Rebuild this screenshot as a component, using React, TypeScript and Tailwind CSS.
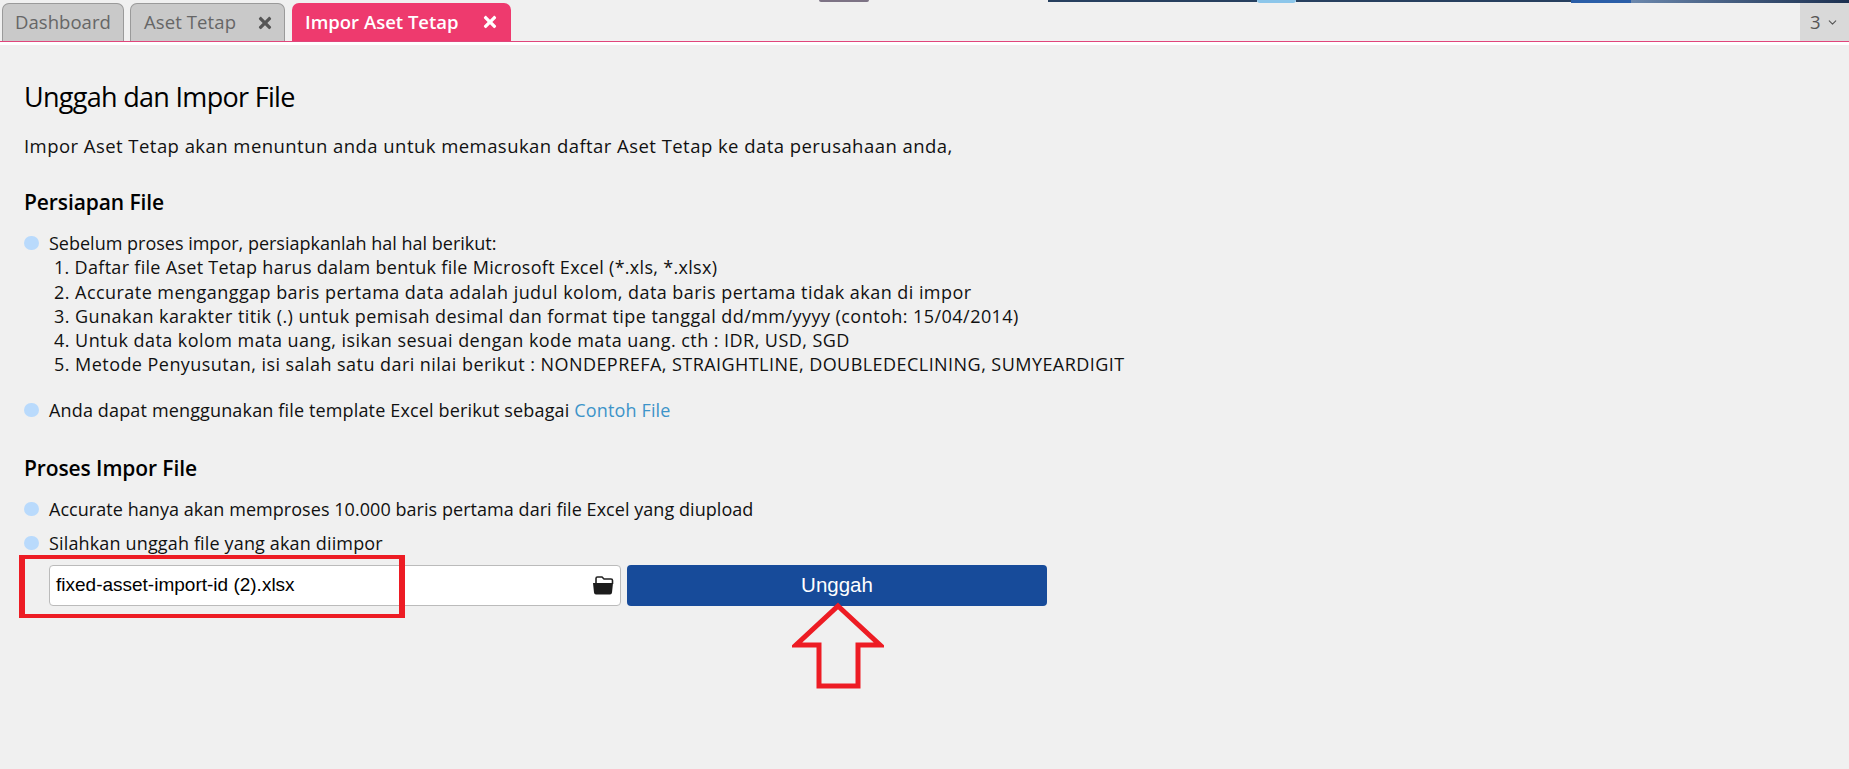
import React from 'react'
import { ChevronDown } from 'lucide-react'
import { FaTimes } from 'react-icons/fa'

const steps = [
  'Daftar file Aset Tetap harus dalam bentuk file Microsoft Excel (*.xls, *.xlsx)',
  'Accurate menganggap baris pertama data adalah judul kolom, data baris pertama tidak akan di impor',
  'Gunakan karakter titik (.) untuk pemisah desimal dan format tipe tanggal dd/mm/yyyy (contoh: 15/04/2014)',
  'Untuk data kolom mata uang, isikan sesuai dengan kode mata uang. cth : IDR, USD, SGD',
  'Metode Penyusutan, isi salah satu dari nilai berikut : NONDEPREFA, STRAIGHTLINE, DOUBLEDECLINING, SUMYEARDIGIT',
]

const Bullet: React.FC<{ children: React.ReactNode; className?: string }> = ({ children, className = '' }) => (
  <div className={`flex text-[18px] ${className}`}>
    <span className="mt-[5px] h-[14px] w-[15px] shrink-0 rounded-full bg-[#b9dafc]" />
    <div className="ml-[10px]">{children}</div>
  </div>
)

export default function App() {
  return (
    <div className="relative h-[769px] w-[1849px] overflow-hidden bg-[#f0f0f0] font-['Open_Sans',sans-serif] text-[18.5px] leading-[24.2px] tracking-[0.45px] text-[#111]">
      {/* sliver of the banner above the tabs */}
      <div className="flex h-[3px] items-start bg-[#f0f0f0]">
        <div className="ml-[819px] h-[2px] w-[50px] rounded-b-full bg-[#7d7385]" />
        <div className="ml-[179px] flex h-full w-[801px] items-start">
          <div className="h-[2px] w-[209px] bg-[#27405f]" />
          <div className="h-full w-[39px] rounded-b-full bg-[#8cc6ea]" />
          <div className="h-[2px] w-[275px] bg-[#27405f]" />
          <div className="h-full w-[60px] bg-[#2a5ea8]" />
          <div className="h-full flex-1 bg-gradient-to-r from-[#6c88ad] to-[#1c3050]" />
        </div>
      </div>
      <div className="flex h-[39px] items-end border-b border-[#e0457b] pl-[2px]">
        <div className="flex h-[38px] w-[122px] items-center rounded-t-[7px] border border-b-0 border-[#9a9a9a] bg-[#c9c9c9] pl-[12px] tracking-[0.05px] text-[#666]">
          Dashboard
        </div>
        <div className="ml-[6px] flex h-[38px] w-[155px] items-center justify-between rounded-t-[7px] border border-b-0 border-[#9a9a9a] bg-[#c9c9c9] pl-[13px] pr-[10px] tracking-[0.1px] text-[#666]">
          Aset Tetap
          <FaTimes className="text-[18px] text-[#555]" />
        </div>
        <div className="ml-[7px] flex h-[38px] w-[219px] items-center justify-between rounded-t-[7px] bg-[#ee3a6e] pl-[13px] pr-[12px] font-semibold tracking-normal text-white">
          Impor Aset Tetap
          <FaTimes className="text-[18px] text-white" />
        </div>
        <div className="ml-auto flex h-[38px] w-[49px] items-center justify-center gap-[5px] bg-[#d9d9d9] text-[#555]">
          3
          <ChevronDown size={13} />
        </div>
      </div>
      <div className="h-[3px] bg-white" />

      <main className="pl-[24px] pt-[35px]">
        <h1 className="text-[27px] font-normal leading-[34px] tracking-[-0.7px] text-black">Unggah dan Impor File</h1>
        <p className="mt-[20px]">Impor Aset Tetap akan menuntun anda untuk memasukan daftar Aset Tetap ke data perusahaan anda,</p>

        <h2 className="mt-[30px] text-[21px] font-semibold leading-[28px] tracking-[-0.1px] text-black">Persiapan File</h2>
        <Bullet className="mt-[15px] tracking-normal">
          <div>Sebelum proses impor, persiapkanlah hal hal berikut:</div>
          <ol className="ml-[5px] tracking-[0.45px]">
            {steps.map((step, i) => (
              <li key={step} className={i === 0 ? 'tracking-[0.3px]' : ''}>{i + 1}. {step}</li>
            ))}
          </ol>
        </Bullet>
        <Bullet className="mt-[22px] tracking-[0.15px]">
          Anda dapat menggunakan file template Excel berikut sebagai{' '}
          <a className="text-[#3d94c9]">Contoh File</a>
        </Bullet>

        <h2 className="mt-[31px] text-[21px] font-semibold leading-[28px] tracking-[-0.1px] text-black">Proses Impor File</h2>
        <Bullet className="mt-[15px] tracking-[0.05px]">Accurate hanya akan memproses 10.000 baris pertama dari file Excel yang diupload</Bullet>
        <Bullet className="mt-[10px] tracking-[0.15px]">Silahkan unggah file yang akan diimpor</Bullet>

        <div className="relative ml-[25px] mt-[10px] flex gap-[6px]">
          <div className="flex h-[41px] w-[572px] items-center justify-between rounded-[4px] border border-[#bbb] bg-white pl-[6px] pr-[6px] font-['Liberation_Sans',sans-serif] text-[19px] tracking-normal text-black">
            fixed-asset-import-id (2).xlsx
            <svg width="22" height="19" viewBox="0 0 22 19">
              <path d="M4 8 V2.5 Q4 1 5.5 1 H10 L12 3 H19 Q20.5 3 20.5 4.5 V8" fill="none" stroke="#222" strokeWidth="1.6" />
              <path d="M1 7 H21 L20 16.5 Q19.8 18.5 18 18.5 H4 Q2.2 18.5 2 16.5 Z" fill="#1c1c1c" />
            </svg>
          </div>
          <button className="h-[41px] w-[420px] rounded-[4px] bg-[#174b9a] font-['Liberation_Sans',sans-serif] text-[20.5px] tracking-normal text-white">
            Unggah
          </button>
          {/* annotation drawn over the form */}
          <div className="absolute left-[-30px] top-[-10px] h-[63px] w-[386px] border-x-[6px] border-y-[4px] border-[#ed1c24]" />
          <svg className="absolute left-[743px] top-[36px]" width="92" height="88" viewBox="0 0 92 88">
            <path d="M46 5 L88 44 H66 V85 H27 V44 H4 Z" fill="none" stroke="#ed1c24" strokeWidth="5" strokeLinejoin="miter" />
          </svg>
        </div>
      </main>
    </div>
  )
}
